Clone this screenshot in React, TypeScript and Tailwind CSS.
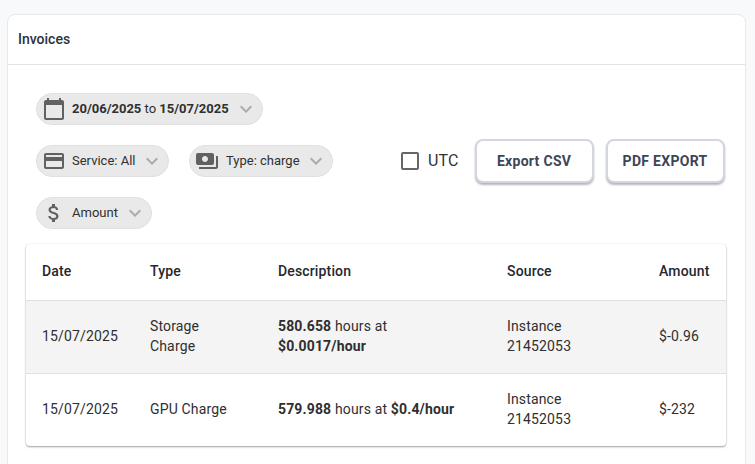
import React from "react";
import { MdCalendarToday, MdCreditCard, MdPayments, MdAttachMoney, MdExpandMore } from "react-icons/md";

function Chip({ icon, children, className = "", textClass = "ml-[6px]" }: { icon: React.ReactNode; children: React.ReactNode; className?: string; textClass?: string }) {
  return (
    <div className={`flex h-8 shrink-0 items-center rounded-2xl border border-[#e0e0e0] bg-[#e9e9e9] pl-[5px] pr-[4px] text-[13px] text-[#303030] ${className}`}>
      <span className="flex w-6 justify-center text-[#616161]">{icon}</span>
      <span className={`whitespace-nowrap ${textClass}`}>{children}</span>
      <MdExpandMore className="ml-auto text-[#ababab]" size={24} />
    </div>
  );
}

function Btn({ children }: { children: React.ReactNode }) {
  return (
    <button className="flex h-[44px] w-[119px] items-center justify-center rounded-lg border-2 border-[#d3d6e1] bg-white text-[14px] font-bold tracking-[0.3px] text-[#3c4657] shadow-[0_2px_2px_rgba(90,95,115,0.45)]">
      {children}
    </button>
  );
}

export default function App() {
  return (
    <div className="h-[464px] w-[755px] overflow-hidden bg-[#f8f9fb] pl-[7px] pr-[9px] pt-[14px] font-['Roboto',sans-serif]">
      <div className="h-[470px] rounded-t-lg border border-[#e6e8ec] bg-white">
        <div className="flex h-[50px] items-center border-b border-[#e4e4e4] pl-[10px] text-[14px] font-medium text-[#2c3240]">
          Invoices
        </div>
        <div className="pl-[18px] pt-[28px]">
          <div className="flex flex-col pl-[10px]">
            <Chip icon={<MdCalendarToday size={24} />} className="w-[227px]">
              <b className="font-bold">20/06/2025</b> to <b className="font-bold">15/07/2025</b>
            </Chip>
            <div className="mt-[20px] flex h-8 items-center">
              <Chip icon={<MdCreditCard size={24} />} className="w-[133px]">Service: All</Chip>
              <Chip icon={<MdPayments size={24} />} className="ml-5 w-[144px]" textClass="ml-[7px]">Type: charge</Chip>
              <label className="ml-[68px] flex items-center text-[16px] tracking-[0.15px] text-[#333]">
                <span className="h-[18px] w-[18px] rounded-[2px] border-2 border-[#666]" />
                <span className="ml-[9px]">UTC</span>
              </label>
              <div className="ml-[16px] flex gap-3">
                <Btn>Export CSV</Btn>
                <Btn>PDF EXPORT</Btn>
              </div>
            </div>
            <Chip icon={<MdAttachMoney size={24} />} className="mt-[20px] w-[116px]">Amount</Chip>
          </div>
          <div className="mt-[15px] w-[700px] overflow-hidden rounded-[4px] bg-white shadow-[0_1px_2px_rgba(0,0,0,0.38),0_0_2px_rgba(0,0,0,0.05)]">
            <table className="w-full table-fixed border-collapse text-left text-[14px] leading-5 tracking-[0.15px] text-[#2f2f2f]">
              <colgroup>
                <col className="w-[108px]" />
                <col className="w-[128px]" />
                <col className="w-[229px]" />
                <col className="w-[152px]" />
                <col className="w-[83px]" />
              </colgroup>
              <thead>
                <tr className="h-[56px] border-b border-[#e0e0e0] font-medium text-[#24272e]">
                  <th className="pb-[2px] pl-4 font-medium">Date</th>
                  <th className="pb-[2px] pl-4 font-medium">Type</th>
                  <th className="pb-[2px] pl-4 font-medium">Description</th>
                  <th className="pb-[2px] pl-4 font-medium">Source</th>
                  <th className="pb-[2px] pl-4 font-medium">Amount</th>
                </tr>
              </thead>
              <tbody>
                <tr className="h-[73px] border-b border-[#e0e0e0] bg-[#f4f4f4]">
                  <td className="pb-[2px] pl-4">15/07/2025</td>
                  <td className="pb-[2px] pl-4 pr-8">Storage Charge</td>
                  <td className="pb-[2px] pl-4 pr-4"><b className="font-bold">580.658</b> hours at <b className="font-bold">$0.0017/hour</b></td>
                  <td className="pb-[2px] pl-4 pr-12">Instance 21452053</td>
                  <td className="pb-[2px] pl-4">$-0.96</td>
                </tr>
                <tr className="h-[73px]">
                  <td className="pb-[2px] pl-4">15/07/2025</td>
                  <td className="pb-[2px] pl-4">GPU Charge</td>
                  <td className="pb-[2px] pl-4"><b className="font-bold">579.988</b> hours at <b className="font-bold">$0.4/hour</b></td>
                  <td className="pb-[2px] pl-4 pr-12">Instance 21452053</td>
                  <td className="pb-[2px] pl-4">$-232</td>
                </tr>
              </tbody>
            </table>
          </div>
        </div>
      </div>
    </div>
  );
}
